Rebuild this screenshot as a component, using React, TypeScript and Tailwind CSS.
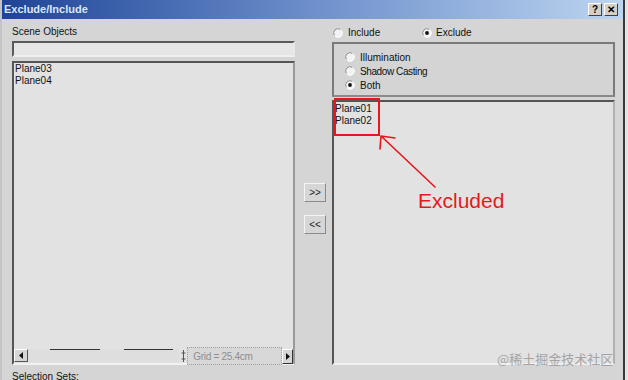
import React from "react";

function Radio({ checked }: { checked?: boolean }) {
  return (
    <svg width="10" height="10" viewBox="0 0 10 10" className="shrink-0">
      <circle cx="5" cy="5" r="4.5" fill="#f2f2f2" />
      <path d="M1.3 7.2 A4.3 4.3 0 0 1 7.2 1.3" stroke="#8c8c8c" strokeWidth="1" fill="none" />
      <path d="M2.8 8.7 A4.3 4.3 0 0 0 8.7 2.8" stroke="#ffffff" strokeWidth="1" fill="none" />
      {checked && <circle cx="5" cy="5" r="1.9" fill="#111" />}
    </svg>
  );
}

function TitleBtn({ children }: { children: React.ReactNode }) {
  return (
    <div className="w-[14px] h-[13px] flex items-center justify-center bg-[#d4d0c8] border border-t-white border-l-white border-r-[#404040] border-b-[#404040] text-[10px] font-bold leading-none text-black">
      {children}
    </div>
  );
}

function PushBtn({ children }: { children: React.ReactNode }) {
  return (
    <div className="w-[22px] h-[19px] flex items-center justify-center bg-[#d6d6d6] border border-t-[#f4f4f4] border-l-[#f4f4f4] border-r-[#8a8a8a] border-b-[#8a8a8a] text-[10px] leading-none text-[#222]">
      {children}
    </div>
  );
}

export default function App() {
  return (
    <div className="relative w-[628px] h-[380px] overflow-hidden bg-[#e4e4e4] font-['Liberation_Sans',Arial,sans-serif] text-[10px] text-[#111]">
      <div className="w-[625px] h-full flex flex-col border-l-2 border-l-[#c4c4c4] border-r-2 border-r-[#3a3a3a] bg-[#d5d5d5]">
        {/* Title bar */}
        <div className="h-[19px] shrink-0 flex items-center pl-[2px] pr-[5px] bg-linear-to-r from-[#1f4496] via-[#6d8fcb] to-[#bed5f0]">
          <span className="text-[11px] font-bold text-[#dce6fb] leading-none">Exclude/Include</span>
          <div className="ml-auto flex gap-[2px]">
            <TitleBtn>?</TitleBtn>
            <TitleBtn>✕</TitleBtn>
          </div>
        </div>

        {/* Body */}
        <div className="flex-1 flex pl-[10px]">
          {/* Left column */}
          <div className="w-[283px] flex flex-col">
            <div className="pt-[7px] leading-[12px] h-[19px]">Scene Objects</div>
            <div className="mt-[3px] h-[16px] bg-[#e6e6e6] border-2 border-t-[#5a5a5a] border-l-[#5a5a5a] border-r-[#e8e8e8] border-b-[#efefef]" />
            <div className="mt-[4px] h-[304px] flex flex-col bg-[#e2e2e2] border-2 border-t-[#555] border-l-[#555] border-r-[#9a9a9a] border-b-[#f0f0f0]">
              <div className="flex-1 pl-[1px] leading-[12px]">
                <div>Plane03</div>
                <div>Plane04</div>
              </div>
              <div className="h-[13px] mb-[1px] flex items-stretch">
                <div className="w-[14px] flex items-center justify-center bg-[#d6d6d6] border border-t-white border-l-white border-r-[#555] border-b-[#555]">
                  <svg width="4" height="7" viewBox="0 0 4 7"><path d="M4 0 L0 3.5 L4 7 Z" fill="#111" /></svg>
                </div>
                <div className="w-[152px] bg-[#dedede] flex flex-col">
                  <div className="flex h-[1px]">
                    <div className="w-[22px]" />
                    <div className="w-[50px] bg-[#333]" />
                    <div className="w-[24px]" />
                    <div className="w-[49px] bg-[#333]" />
                  </div>
                </div>
                <div className="w-[8px] flex items-center justify-center">
                  <svg width="5" height="12" viewBox="0 0 5 12">
                    <path d="M2.5 0 V12 M0.5 3 H4.5 M0.5 9 H4.5" stroke="#555" strokeWidth="1" fill="none" />
                  </svg>
                </div>
                <div className="w-[95px] -mb-[3px] -mt-[2px] flex items-center pl-[5px] bg-[#d8d8d8] border border-dotted border-[#a0a0a0] text-[#8e8e8e] tracking-[-0.3px]">
                  Grid = 25.4cm
                </div>
                <div className="w-[11px] -mb-[2px] flex items-center justify-center bg-[#d6d6d6] border border-t-white border-l-white border-r-[#333] border-b-[#333]">
                  <svg width="4" height="7" viewBox="0 0 4 7"><path d="M0 0 L4 3.5 L0 7 Z" fill="#111" /></svg>
                </div>
              </div>
            </div>
            <div className="mt-[6px] leading-[12px]">Selection Sets:</div>
          </div>

          {/* Middle column */}
          <div className="w-[37px] flex flex-col pl-[9px] pt-[164px]">
            <PushBtn>&gt;&gt;</PushBtn>
            <div className="mt-[13px]">
              <PushBtn>&lt;&lt;</PushBtn>
            </div>
          </div>

          {/* Right column */}
          <div className="w-[283px] flex flex-col">
            <div className="mt-[8px] h-[12px] flex items-center pl-[1px] leading-[12px]">
              <div className="w-[89px] flex items-center gap-[5px]">
                <Radio />
                <span>Include</span>
              </div>
              <div className="flex items-center gap-[4px]">
                <Radio checked />
                <span>Exclude</span>
              </div>
            </div>
            <div className="mt-[3px] h-[55px] pt-[6px] pl-[11px] flex flex-col border-2 border-t-[#7a7a7a] border-l-[#7a7a7a] border-r-[#7a7a7a] border-b-[#8a8a8a] bg-[#d4d4d4]">
              <div className="h-[14px] flex items-center gap-[5px]">
                <Radio />
                <span>Illumination</span>
              </div>
              <div className="h-[14px] flex items-center gap-[5px]">
                <Radio />
                <span className="tracking-[-0.4px]">Shadow Casting</span>
              </div>
              <div className="h-[14px] flex items-center gap-[5px]">
                <Radio checked />
                <span>Both</span>
              </div>
            </div>
            <div className="mt-[3px] h-[265px] pt-[1px] pl-[1px] leading-[12px] bg-[#e2e2e2] border-2 border-t-[#555] border-l-[#555] border-r-[#b0b0b0] border-b-[#f0f0f0]">
              <div>Plane01</div>
              <div>Plane02</div>
            </div>
          </div>
        </div>
      </div>

      {/* Annotation overlay */}
      <div className="absolute left-[334px] top-[98px] w-[46px] h-[38px] border-2 border-[#e5161c]" />
      <svg className="absolute left-0 top-0" width="628" height="380" viewBox="0 0 628 380">
        <path d="M435 187 L381 136 M381 136 L395 138 M381 136 L380 149" stroke="#e5161c" strokeWidth="1.6" fill="none" strokeLinecap="round" />
      </svg>
      <div className="absolute left-[418px] top-[190px] text-[21px] leading-[21px] text-[#e41b1b]">Excluded</div>
      <div className="absolute left-[497px] top-[352px] text-[13px] leading-[13px] text-[#a4a4a4] font-['Noto_Sans_CJK_SC',sans-serif]">@稀土掘金技术社区</div>
    </div>
  );
}
